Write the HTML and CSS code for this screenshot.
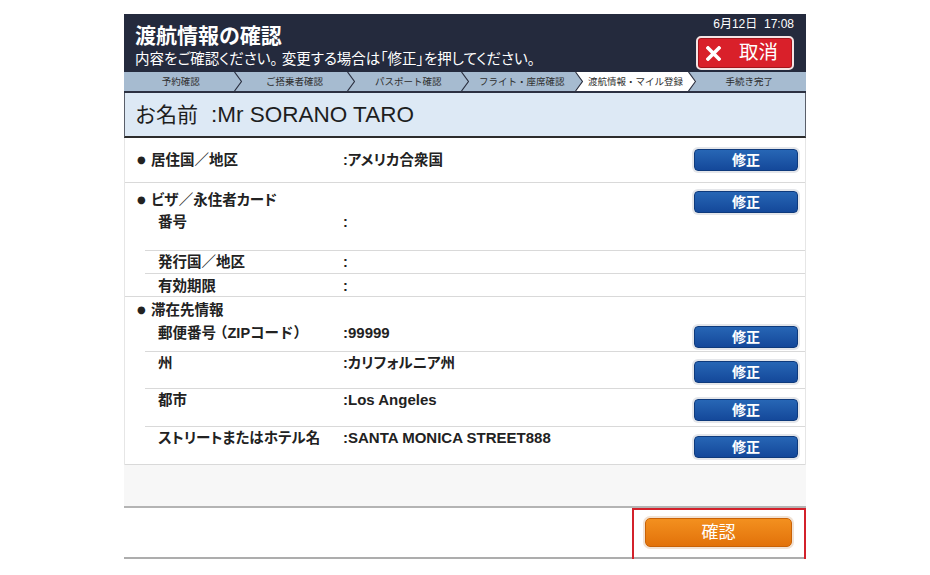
FILE: index.html
```html
<!DOCTYPE html>
<html lang="ja">
<head>
    <meta charset="UTF-8">
    <title>渡航情報の確認</title>
    <link rel="stylesheet" href="styles.css">
</head>
<body>

    <div class="screen">
        <header class="top">
            <div class="top-text">
                <h1>渡航情報の確認</h1>
                <p>内容をご確認ください。 変更する場合は「修正」を押してください。</p>
            </div>
            <div class="top-side">
                <div class="clock">6月12日&nbsp;&nbsp;17:08</div>
                <button class="btn-cancel">
                    <svg width="15" height="15" viewBox="0 0 15 15"><path d="M2 2 L13 13 M13 2 L2 13" stroke="#fff" stroke-width="3.6" stroke-linecap="square"/></svg>
                    <span>取消</span>
                </button>
            </div>
        </header>

        <!-- progress steps -->
        <ol class="steps">
            <li><span>予約確認</span><svg class="chev" viewBox="0 0 8 19"><polyline points="0.5,0 7.5,9.5 0.5,19"/></svg></li>
            <li><span>ご搭乗者確認</span><svg class="chev" viewBox="0 0 8 19"><polyline points="0.5,0 7.5,9.5 0.5,19"/></svg></li>
            <li><span>パスポート確認</span><svg class="chev" viewBox="0 0 8 19"><polyline points="0.5,0 7.5,9.5 0.5,19"/></svg></li>
            <li><span>フライト・座席確認</span><svg class="chev" viewBox="0 0 8 19"><polyline points="0.5,0 7.5,9.5 0.5,19"/></svg></li>
            <li class="active"><span>渡航情報・マイル登録</span><svg class="chev" viewBox="0 0 8 19"><polyline points="0.5,0 7.5,9.5 0.5,19"/></svg></li>
            <li><span>手続き完了</span></li>
        </ol>

        <div class="name-bar"><span class="name-label">お名前</span><span class="name-value">:Mr SORANO TARO</span></div>

        <div class="rows">
            <div class="row single">
                <div class="label"><span class="dot">●</span>居住国／地区</div>
                <div class="value">:アメリカ合衆国</div>
                <button class="btn-edit">修正</button>
            </div>

            <div class="section">
                <div class="row head visa">
                    <div class="label"><span class="dot">●</span>ビザ／永住者カード</div>
                    <div class="value"></div>
                    <button class="btn-edit">修正</button>
                </div>
                <div class="sub h-number">
                    <div class="label">番号</div>
                    <div class="value">:</div>
                </div>
                <div class="sub h-issuer">
                    <div class="label">発行国／地区</div>
                    <div class="value">:</div>
                </div>
                <div class="sub h-expiry">
                    <div class="label">有効期限</div>
                    <div class="value">:</div>
                </div>
            </div>

            <div class="section">
                <div class="row head stay">
                    <div class="label"><span class="dot">●</span>滞在先情報</div>
                </div>
                <div class="sub h-zip">
                    <div class="label">郵便番号<span class="wide">（ZIPコード）</span></div>
                    <div class="value latin">:99999</div>
                    <button class="btn-edit">修正</button>
                </div>
                <div class="sub h-state">
                    <div class="label">州</div>
                    <div class="value">:カリフォルニア州</div>
                    <button class="btn-edit">修正</button>
                </div>
                <div class="sub h-city">
                    <div class="label">都市</div>
                    <div class="value latin">:Los Angeles</div>
                    <button class="btn-edit">修正</button>
                </div>
                <div class="sub h-street">
                    <div class="label">ストリートまたはホテル名</div>
                    <div class="value latin">:SANTA MONICA STREET888</div>
                    <button class="btn-edit">修正</button>
                </div>
            </div>
        </div>

        <div class="blank"></div>

        <div class="footer">
            <button class="btn-confirm">確認</button>
            <span class="mark"></span>
        </div>
    </div>

</body>
</html>
```

FILE: styles.css
```css
body {
    margin: 0;
    padding: 0;
    background-color: #fff;
    color: #222;
    font-family: "Liberation Sans", "Noto Sans CJK JP", sans-serif;
}

.screen {
    width: 682px;
    margin: 14px 0 0 124px;
}

/* Header */
.top {
    display: flex;
    justify-content: space-between;
    height: 58px;
    padding: 0 12px 0 11px;
    box-sizing: border-box;
    background-color: #242a3d;
    color: #fff;
}

.top h1 {
    margin: 0;
    padding-top: 9px;
    font-size: 21px;
    line-height: 26px;
    font-weight: bold;
    font-feature-settings: "palt";
}

.top p {
    margin: 0;
    font-size: 14.5px;
    line-height: 20px;
    font-feature-settings: "palt";
}

.top-side {
    display: flex;
    flex-direction: column;
    align-items: flex-end;
}

.clock {
    padding-top: 3px;
    font-size: 12px;
    line-height: 14px;
}

.btn-cancel {
    display: flex;
    align-items: center;
    gap: 18px;
    margin-top: 5px;
    width: 98px;
    height: 34px;
    padding: 0 0 0 8px;
    background-color: #d9202a;
    border: 2px solid #f3e4e4;
    border-radius: 5px;
    box-shadow: inset 0 0 0 1px #a5141b;
    color: #fff;
    font-family: inherit;
    font-size: 19.5px;
    line-height: 1;
}

/* Steps */
.steps {
    display: flex;
    list-style: none;
    margin: 0;
    padding: 0;
    height: 19px;
    background-color: #a6bbd0;
    border-bottom: 2px solid #2c3142;
}

.steps li {
    flex: 1;
    position: relative;
    text-align: center;
    font-size: 9.5px;
    line-height: 19px;
    color: #2d2d2d;
}

.steps li span {
    position: relative;
}

.steps li.active::before {
    content: "";
    position: absolute;
    top: 0;
    bottom: 0;
    left: -4px;
    right: -4px;
    background-color: #fff;
    clip-path: polygon(0 0, calc(100% - 8px) 0, 100% 50%, calc(100% - 8px) 100%, 0 100%, 8px 50%);
}

.chev {
    position: absolute;
    top: 0;
    right: -4px;
    width: 8px;
    height: 19px;
    z-index: 1;
}

.chev polyline {
    fill: none;
    stroke: #2a2f3f;
    stroke-width: 1.2;
}

/* Name */
.name-bar {
    height: 45px;
    padding-left: 10px;
    box-sizing: border-box;
    background-color: #dde9f5;
    border-left: 1px solid #5a5f6a;
    border-right: 1px solid #5a5f6a;
    border-bottom: 2px solid #2c2c2c;
    font-size: 21px;
    line-height: 43px;
    color: #1e1e1e;
}

.name-label {
    margin-right: 13px;
}

.name-value {
    font-size: 22.5px;
}

/* Rows */
.rows {
    border-left: 1px solid #e6e6e6;
    border-right: 1px solid #e6e6e6;
}

.row,
.sub {
    display: flex;
    align-items: flex-start;
    box-sizing: border-box;
    padding-right: 7px;
    font-size: 14.5px;
    line-height: 22px;
    font-weight: bold;
    font-feature-settings: "palt";
}

.row {
    padding-left: 12px;
}

.row .label {
    width: 206px;
}

.sub {
    margin-left: 20px;
    padding-left: 13px;
    border-bottom: 1px solid #d9d9d9;
}

.sub .label {
    width: 185px;
}

.sub:last-child {
    border-bottom: none;
}

.wide {
    font-feature-settings: normal;
    margin-left: -3px;
}

.dot {
    display: inline-block;
    width: 14px;
    font-family: "DejaVu Sans", sans-serif;
    font-size: 10px;
    vertical-align: top;
}

.value {
    flex: 1;
}

.value.latin {
    font-size: 15px;
}

.single {
    height: 45px;
    align-items: center;
    border-bottom: 1px solid #d9d9d9;
}

.section {
    border-bottom: 1px solid #d9d9d9;
}

.visa {
    height: 28px;
    padding-top: 6px;
}

.visa .btn-edit {
    margin-top: 2px;
}

.stay {
    height: 24px;
    padding-top: 2px;
}

.h-number { height: 40px; }
.h-issuer { height: 23px; }
.h-expiry { height: 22px; padding-top: 1px; }

.h-zip { height: 31px; padding-top: 1px; }
.h-zip .btn-edit { margin-top: 4px; }
.h-state { height: 37px; }
.h-state .btn-edit { margin-top: 9px; }
.h-city { height: 38px; }
.h-city .btn-edit { margin-top: 10px; }
.h-street { height: 37px; }
.h-street .btn-edit { margin-top: 9px; }

.btn-edit {
    width: 104px;
    height: 22px;
    padding: 0;
    background: linear-gradient(#2766b5, #14489a);
    border: 1px solid #0e3a7c;
    border-radius: 4px;
    box-shadow: 0 0 0 2px #e4e6ea;
    color: #fff;
    font-family: inherit;
    font-size: 14px;
    font-weight: bold;
    line-height: 20px;
}

/* Bottom */
.blank {
    height: 43px;
    box-sizing: border-box;
    background-color: #f7f7f7;
    border-bottom: 2px solid #b4b4b4;
}

.footer {
    position: relative;
    display: flex;
    justify-content: flex-end;
    height: 51px;
    padding: 10px 14px 0 0;
    box-sizing: border-box;
    border-bottom: 2px solid #adadad;
}

.btn-confirm {
    width: 147px;
    height: 29px;
    padding: 0;
    background: linear-gradient(#f3901f, #e2720a);
    border: 1px solid #c96206;
    border-radius: 5px;
    box-shadow: 0 0 0 2px #f1e2d4;
    color: #fff;
    font-family: inherit;
    font-size: 17px;
    line-height: 27px;
}

/* red highlight around the confirm button */
.mark {
    position: absolute;
    top: 0;
    left: 508px;
    width: 174px;
    height: 54px;
    box-sizing: border-box;
    border: 2px solid #d3212b;
}
```
